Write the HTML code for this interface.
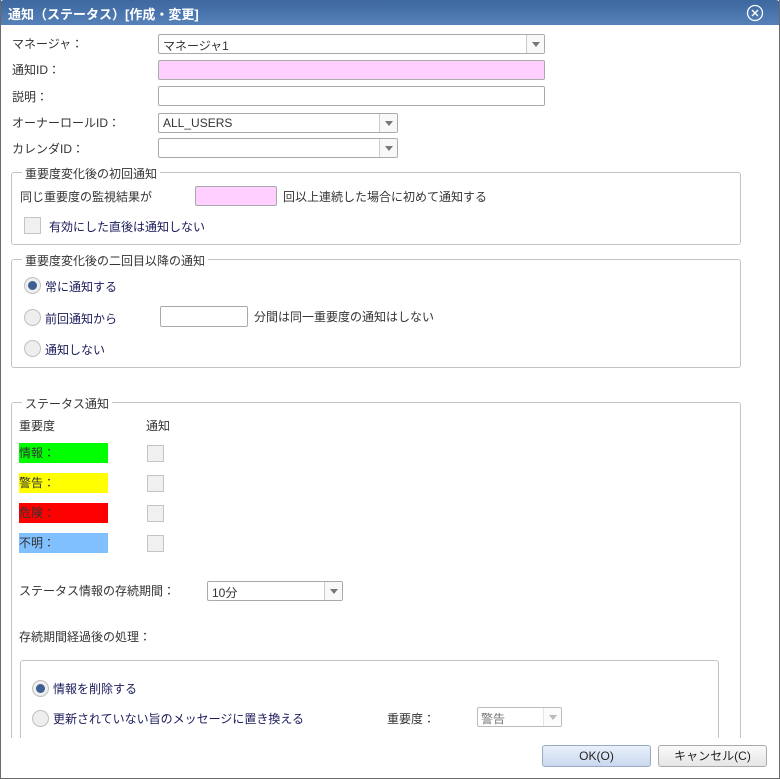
<!DOCTYPE html>
<html><head><meta charset="utf-8"><style>
*{box-sizing:border-box;margin:0;padding:0}
html,body{width:780px;height:779px;overflow:hidden}
body{position:relative;background:#fff;font-family:"Liberation Sans","Noto Sans CJK JP",sans-serif;font-size:12px;color:#333}
.a{position:absolute;white-space:nowrap}
.frame{position:absolute;left:0;top:0;width:780px;height:779px;border:1px solid #6a6a6a;border-top:none}
.title{position:absolute;left:0;top:0;width:780px;height:25px;background:linear-gradient(#3d679e,#5581b9);border-radius:4px 4px 0 0}
.title span{position:absolute;left:8px;top:4px;color:#fff;font-weight:bold;font-size:13px}
.in{position:absolute;border:1px solid #aaa;background:#fff;border-radius:2px}
.pink{background:#ffd0ff}
.arr{position:absolute;right:0;top:0;bottom:0;width:18px;border-left:1px solid #ccc;background:#f8f8f8}
.arr:after{content:"";position:absolute;left:5px;top:7px;border:4px solid transparent;border-top:5px solid #777}
.fs{position:absolute;border:1px solid #c4c4c4;border-radius:3px}
.lg{position:absolute;background:#fff;padding:0 3px;top:-8px;left:10px;color:#333}
.cb{position:absolute;width:17px;height:17px;border:1px solid #c4c4c4;background:#f0f0f0}
.rd{position:absolute;width:17px;height:17px;border:1px solid #c0c0c0;border-radius:50%;background:#eee}
.rd.on:after{content:"";position:absolute;left:3px;top:3px;width:9px;height:9px;border-radius:50%;background:#3d5f92}
.nv{color:#1a1a5a}
.col{position:absolute;left:19px;width:89px;height:20px;line-height:20px;color:#333}
.btn{position:absolute;height:22px;border:1px solid #aaa;border-radius:3px;text-align:center;line-height:20px;color:#222;font-size:12px}
</style></head><body>
<div class="title"><span>通知（ステータス）[作成・変更]</span>
<svg class="a" style="left:746px;top:4px" width="18" height="18"><circle cx="9" cy="9" r="7.5" fill="none" stroke="#fff" stroke-width="1.3"/><path d="M6 6L12 12M12 6L6 12" stroke="#fff" stroke-width="1.4"/></svg></div>

<div class="a" style="left:12px;top:35px">マネージャ：</div>
<div class="in" style="left:158px;top:34px;width:387px;height:20px"><span class="a" style="left:4px;top:2px">マネージャ1</span><div class="arr"></div></div>
<div class="a" style="left:12px;top:61px">通知ID：</div>
<div class="in pink" style="left:158px;top:60px;width:387px;height:20px"></div>
<div class="a" style="left:12px;top:88px">説明：</div>
<div class="in" style="left:158px;top:86px;width:387px;height:20px"></div>
<div class="a" style="left:12px;top:114px">オーナーロールID：</div>
<div class="in" style="left:158px;top:113px;width:240px;height:20px"><span class="a" style="left:4px;top:2px">ALL_USERS</span><div class="arr"></div></div>
<div class="a" style="left:12px;top:140px">カレンダID：</div>
<div class="in" style="left:158px;top:138px;width:240px;height:20px"><div class="arr"></div></div>

<div class="fs" style="left:11px;top:172px;width:730px;height:73px"><span class="lg">重要度変化後の初回通知</span></div>
<div class="a" style="left:20px;top:188px">同じ重要度の監視結果が</div>
<div class="in pink" style="left:195px;top:186px;width:82px;height:20px"></div>
<div class="a" style="left:283px;top:188px">回以上連続した場合に初めて通知する</div>
<div class="cb" style="left:24px;top:217px"></div>
<div class="a nv" style="left:49px;top:218px">有効にした直後は通知しない</div>

<div class="fs" style="left:11px;top:259px;width:730px;height:109px"><span class="lg">重要度変化後の二回目以降の通知</span></div>
<div class="rd on" style="left:24px;top:277px"></div><div class="a nv" style="left:45px;top:278px">常に通知する</div>
<div class="rd" style="left:24px;top:309px"></div><div class="a nv" style="left:45px;top:310px">前回通知から</div>
<div class="in" style="left:160px;top:306px;width:88px;height:21px"></div>
<div class="a" style="left:254px;top:308px">分間は同一重要度の通知はしない</div>
<div class="rd" style="left:24px;top:340px"></div><div class="a nv" style="left:45px;top:341px">通知しない</div>

<div class="fs" style="left:11px;top:402px;width:730px;height:350px"><span class="lg">ステータス通知</span></div>
<div class="a" style="left:19px;top:417px">重要度</div><div class="a" style="left:146px;top:417px">通知</div>
<div class="col" style="top:443px;background:#00ff00">情報：</div>
<div class="col" style="top:473px;background:#ffff00">警告：</div>
<div class="col" style="top:503px;background:#ff0000">危険：</div>
<div class="col" style="top:533px;background:#80c0ff">不明：</div>
<div class="cb" style="left:147px;top:445px"></div>
<div class="cb" style="left:147px;top:475px"></div>
<div class="cb" style="left:147px;top:505px"></div>
<div class="cb" style="left:147px;top:535px"></div>
<div class="a" style="left:19px;top:582px">ステータス情報の存続期間：</div>
<div class="in" style="left:207px;top:581px;width:136px;height:20px"><span class="a" style="left:4px;top:2px">10分</span><div class="arr"></div></div>
<div class="a" style="left:19px;top:628px">存続期間経過後の処理：</div>
<div class="fs" style="left:20px;top:660px;width:699px;height:90px"></div>
<div class="rd on" style="left:32px;top:680px"></div><div class="a nv" style="left:53px;top:680px">情報を削除する</div>
<div class="rd" style="left:32px;top:710px"></div><div class="a nv" style="left:53px;top:710px">更新されていない旨のメッセージに置き換える</div>
<div class="a" style="left:387px;top:710px">重要度：</div>
<div class="in" style="left:477px;top:707px;width:85px;height:20px;border-color:#bbb"><span class="a" style="left:3px;top:2px;color:#777">警告</span><div class="arr" style="opacity:.5"></div></div>
<div class="a" style="left:0;top:738px;width:780px;height:41px;background:#fff"></div>
<div class="frame"></div>

<div class="btn" style="left:542px;top:745px;width:109px;background:linear-gradient(#e8f0fa,#c9d9ee);border-color:#9aaac0">OK(O)</div>
<div class="btn" style="left:658px;top:745px;width:109px;background:linear-gradient(#fafafa,#e6e6e6)">キャンセル(C)</div>
</body></html>
